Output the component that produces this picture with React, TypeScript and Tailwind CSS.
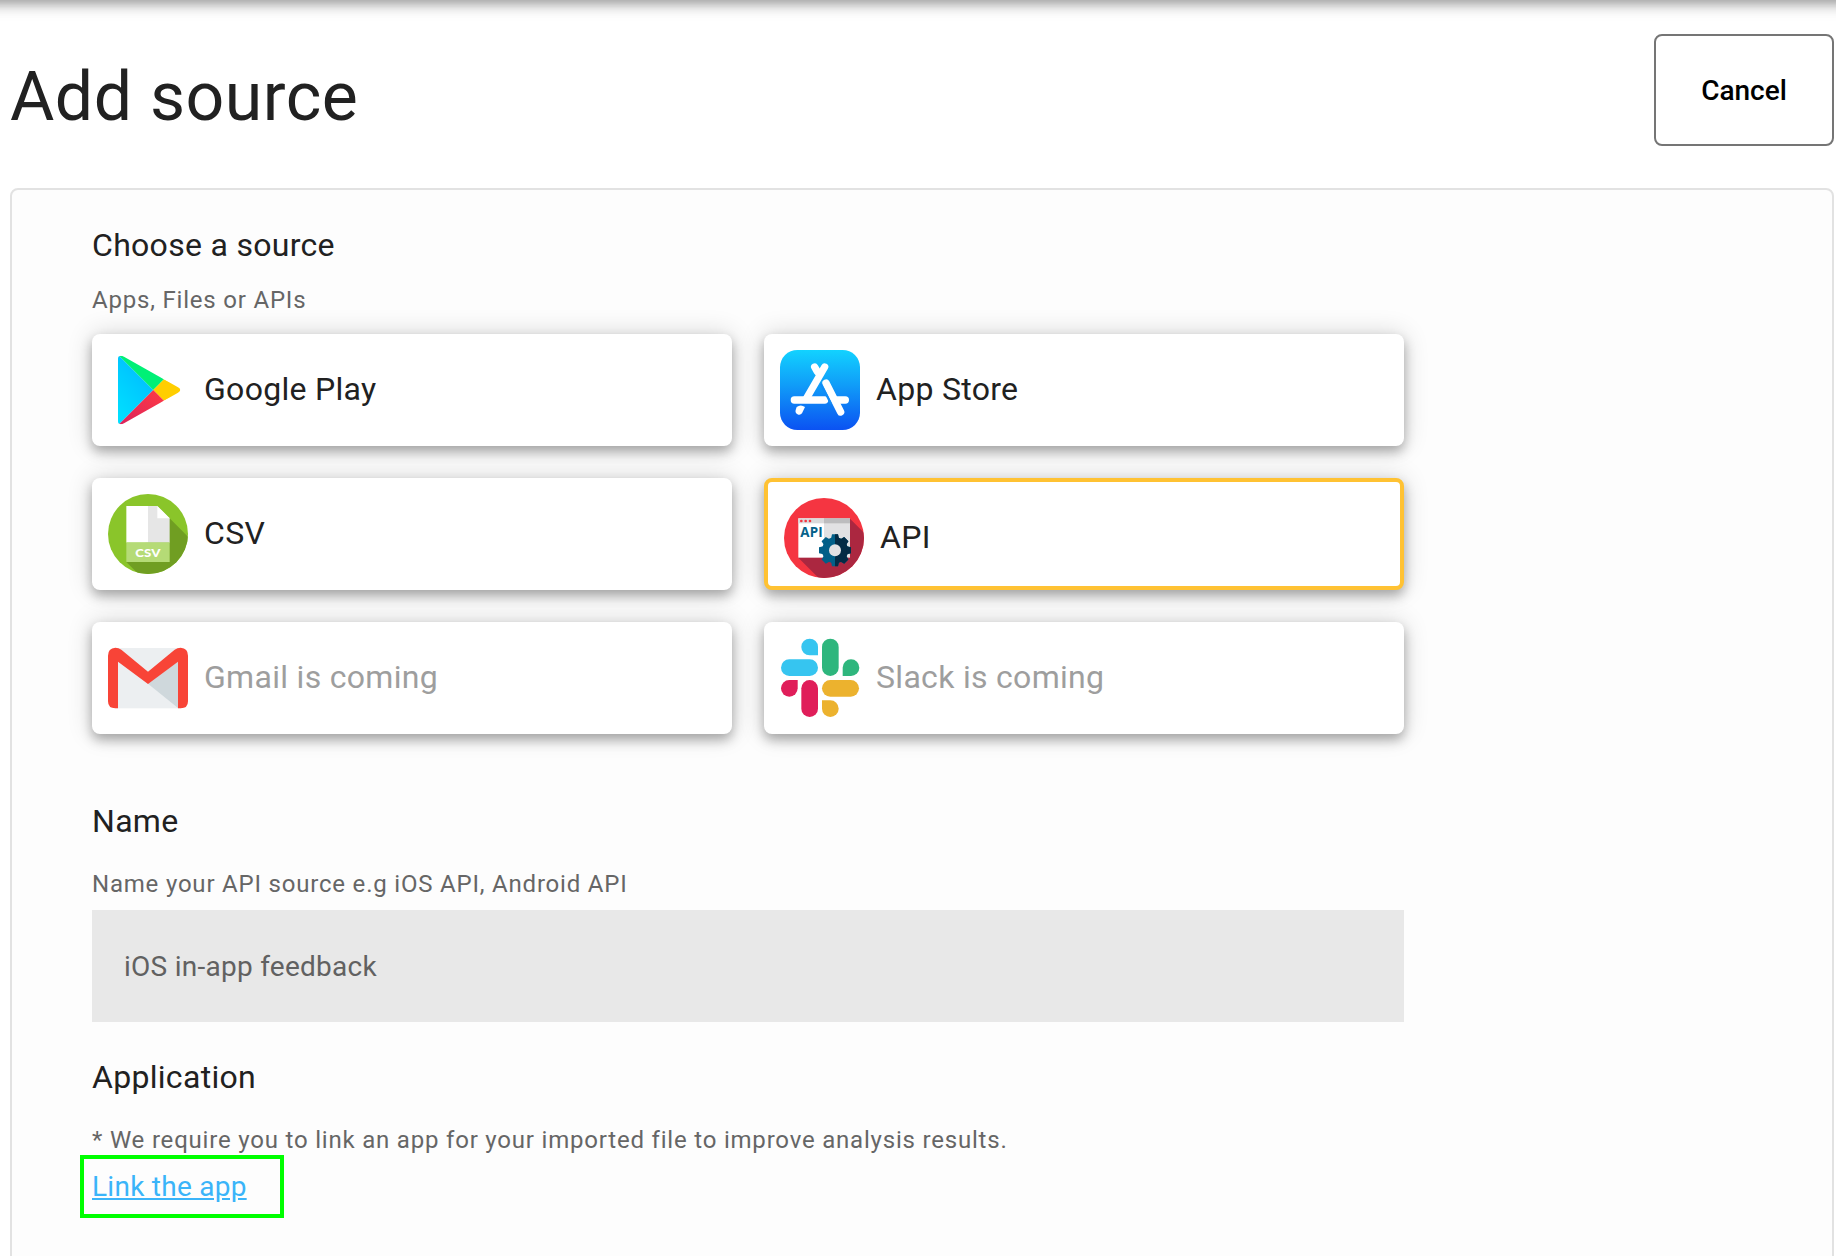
import type { ReactNode } from "react";

function GooglePlayIcon() {
  return (
    <svg viewBox="0 0 240 240" className="size-20 shrink-0" aria-hidden="true">
      <defs>
        <clipPath id="gp-clip">
          <path d="M30 26Q30 17 38 17Q43 17 48 20L210 112Q224 120 210 128L48 220Q43 223 38 223Q30 223 30 214Z" />
        </clipPath>
        <linearGradient id="gp-blue" x1="0.8" y1="0" x2="0.2" y2="1">
          <stop offset="0" stopColor="#00b8ff" />
          <stop offset="1" stopColor="#00e0ff" />
        </linearGradient>
        <linearGradient id="gp-red" x1="1" y1="0" x2="0" y2="1">
          <stop offset="0" stopColor="#ff3a44" />
          <stop offset="1" stopColor="#d8215f" />
        </linearGradient>
      </defs>
      <g clipPath="url(#gp-clip)">
        <path d="M30 14L136 120L30 226Z" fill="url(#gp-blue)" />
        <path d="M30 14L136 120L168 88L60 0Z" fill="#00f076" />
        <path d="M136 120L168 88L240 120L168 152Z" fill="#ffce00" />
        <path d="M136 120L168 152L60 240L30 226Z" fill="url(#gp-red)" />
      </g>
    </svg>
  );
}

function AppStoreIcon() {
  return (
    <svg viewBox="0 0 240 240" className="size-20 shrink-0" aria-hidden="true">
      <defs>
        <linearGradient id="as-bg" x1="0" y1="0" x2="0" y2="1">
          <stop offset="0" stopColor="#12d2ff" />
          <stop offset="0.45" stopColor="#109bf8" />
          <stop offset="1" stopColor="#0b52f2" />
        </linearGradient>
      </defs>
      <rect width="240" height="240" rx="52" fill="url(#as-bg)" />
      <g stroke="#fff" strokeWidth="22" strokeLinecap="round" fill="none">
        <path d="M104 51L112 65" />
        <path d="M134 51L80 144" />
        <path d="M43 150H134" />
        <path d="M172 150H196" />
        <path d="M138 99L182 186" />
      </g>
      <path d="M50 171Q62 162 75 171L66 190A11 11 0 0 1 47 180Z" fill="#fff" />
      <path d="M122 101L153 162" stroke="#118cf7" strokeWidth="6" />
    </svg>
  );
}

function CsvIcon() {
  return (
    <svg viewBox="0 0 240 240" className="size-20 shrink-0" aria-hidden="true">
      <defs>
        <clipPath id="csv-clip">
          <circle cx="120" cy="120" r="120" />
        </clipPath>
      </defs>
      <g clipPath="url(#csv-clip)">
        <rect width="240" height="240" fill="#8ac52a" />
        <path d="M185 73L250 138V250H101L55 204Z" fill="#709e22" />
      </g>
      <path d="M55 36H120V146H55Z" fill="#fff" />
      <path d="M120 36H148L185 73V146H120Z" fill="#e6e6e6" />
      <path d="M148 36V73H185Z" fill="#fff" />
      <rect x="55" y="145" width="130" height="59" fill="#b5db76" />
      <text x="82" y="188" textLength="76" lengthAdjust="spacingAndGlyphs" fontFamily="Lato, sans-serif" fontWeight="900" fontSize="36" fill="#fff">
        CSV
      </text>
    </svg>
  );
}

const gearTeeth = [0, 45, 90, 135, 180, 225, 270, 315];

function Gear({ fill }: { fill: string }) {
  return (
    <g fill={fill}>
      <circle cx="153" cy="157" r="39" />
      {gearTeeth.map((angle) => (
        <path key={angle} d="M141 122L144 109H162L165 122Z" transform={`rotate(${angle} 153 157)`} />
      ))}
    </g>
  );
}

function ApiIcon() {
  return (
    <svg viewBox="0 0 240 240" className="size-20 shrink-0" aria-hidden="true">
      <defs>
        <clipPath id="api-clip">
          <circle cx="120" cy="120" r="120" />
        </clipPath>
        <clipPath id="api-right">
          <rect x="153" y="90" width="87" height="130" />
        </clipPath>
      </defs>
      <g clipPath="url(#api-clip)">
        <rect width="240" height="240" fill="#f53541" />
        <path d="M198 62L250 114V250H114L43 179Z" fill="#ab2740" />
      </g>
      <rect x="43" y="61" width="77" height="118" fill="#fff" />
      <rect x="120" y="61" width="78" height="118" fill="#e1e1e3" />
      <rect x="43" y="61" width="77" height="15" fill="#d9d9da" />
      <rect x="120" y="61" width="78" height="15" fill="#bcbcbe" />
      <g fill="#f53541">
        <circle cx="52" cy="69" r="4" />
        <circle cx="65" cy="69" r="4" />
        <circle cx="78" cy="69" r="4" />
      </g>
      <text x="49" y="116" textLength="67" lengthAdjust="spacingAndGlyphs" fontFamily="'Open Sans', sans-serif" fontWeight="700" fontSize="43" fill="#04618a">
        API
      </text>
      <Gear fill="#015f88" />
      <g clipPath="url(#api-right)">
        <Gear fill="#032b45" />
      </g>
      <circle cx="153" cy="157" r="18" fill="#e1e1e3" />
    </svg>
  );
}

function GmailIcon() {
  return (
    <svg viewBox="0 0 240 240" className="size-20 shrink-0" aria-hidden="true">
      <rect x="20" y="30" width="200" height="181" fill="#eceff1" />
      <path d="M120 137L211 69V211Z" fill="#cfd8dc" />
      <path
        d="M22 29Q32 29 40 35L120 101L200 35Q208 29 218 29Q240 30 240 53V190Q240 211 218 211H210V71L120 138L30 71V211H22Q0 211 0 190V53Q0 30 22 29Z"
        fill="#f84437"
      />
    </svg>
  );
}

function SlackIcon() {
  return (
    <svg viewBox="0 0 240 240" className="size-20 shrink-0" aria-hidden="true">
      <g fill="#36c5f0">
        <path d="M114 52H89A25 25 0 1 1 114 27Z" />
        <rect x="3" y="64" width="111" height="50" rx="25" />
      </g>
      <g fill="#2eb67d">
        <rect x="126" y="2" width="50" height="112" rx="25" />
        <path d="M188 114V89A25 25 0 1 1 213 114Z" />
      </g>
      <g fill="#e01e5a">
        <path d="M53 126V151A25 25 0 1 1 28 126Z" />
        <rect x="64" y="126" width="50" height="111" rx="25" />
      </g>
      <g fill="#ecb22e">
        <rect x="126" y="126" width="111" height="50" rx="25" />
        <path d="M126 187H151A25 25 0 1 1 126 212Z" />
      </g>
    </svg>
  );
}

type Source = { label: string; icon: ReactNode; selected?: boolean; disabled?: boolean };

const sources: Source[] = [
  { label: "Google Play", icon: <GooglePlayIcon /> },
  { label: "App Store", icon: <AppStoreIcon /> },
  { label: "CSV", icon: <CsvIcon /> },
  { label: "API", icon: <ApiIcon />, selected: true },
  { label: "Gmail is coming", icon: <GmailIcon />, disabled: true },
  { label: "Slack is coming", icon: <SlackIcon />, disabled: true },
];

function SourceCard({ label, icon, selected, disabled }: Source) {
  return (
    <button
      type="button"
      disabled={disabled}
      className={`flex h-28 items-start gap-4 rounded-lg bg-white p-4 text-left text-[32px] leading-[78px] tracking-[0.3px] shadow-[0_6px_12px_0_rgba(0,0,0,0.29),0_0_26px_0_rgba(0,0,0,0.16)] ${
        selected ? "border-4 border-[#ffc233]" : ""
      } ${disabled ? "text-[#9e9e9e]" : "text-[#212121]"}`}
    >
      {icon}
      <span>{label}</span>
    </button>
  );
}

export default function App() {
  return (
    <div className="flex h-screen flex-col overflow-hidden bg-white font-[Roboto,sans-serif] text-[#212121]">
      <div className="-mx-8 -mt-16 h-16 shrink-0 shadow-[0_4px_8px_-2px_rgba(0,0,0,0.2),0_8px_10px_0_rgba(0,0,0,0.14),0_2px_20px_0_rgba(0,0,0,0.12)]" />
      <header className="flex h-[188px] shrink-0 items-start justify-between pt-[34px] pr-0.5 pl-2.5">
        <h1 className="mt-[23px] text-[68px] leading-[80px] tracking-[0.5px]">Add source</h1>
        <button
          type="button"
          className="h-28 w-[180px] rounded-lg border-2 border-[#757575] pt-0.5 text-[28px] font-medium text-black"
        >
          Cancel
        </button>
      </header>
      <main className="mr-0.5 ml-2.5 h-[1200px] shrink-0 rounded-t-lg border-2 border-[#e2e2e2] bg-[#fdfdfd] px-20 pt-[35px]">
        <section className="w-[1312px]">
          <h2 className="text-[32px] leading-10 tracking-[0.3px]">Choose a source</h2>
          <p className="mt-[19px] text-2xl leading-8 tracking-[0.8px] text-[#666]">Apps, Files or APIs</p>
          <div className="mt-[18px] grid grid-cols-2 gap-8">
            {sources.map((source) => (
              <SourceCard key={source.label} {...source} />
            ))}
          </div>
        </section>
        <section className="mt-[67px] w-[1312px]">
          <h2 className="text-[32px] leading-10 tracking-[0.3px]">Name</h2>
          <p className="mt-[27px] text-2xl leading-8 tracking-[0.8px] text-[#666]">
            Name your API source e.g iOS API, Android API
          </p>
          <div className="mt-2.5 flex h-28 items-center bg-[#e8e8e8] px-8 pt-0.5 text-[28px] tracking-[0.26px] text-[#616161]">
            iOS in-app feedback
          </div>
        </section>
        <section className="mt-[35px] w-[1312px]">
          <h2 className="text-[32px] leading-10 tracking-[0.3px]">Application</h2>
          <p className="mt-[27px] text-2xl leading-8 tracking-[0.8px] text-[#666]">
            * We require you to link an app for your imported file to improve analysis results.
          </p>
          <div className="-mt-px -ml-3 flex h-[63px] w-[204px] items-center border-4 border-[#00ff00] pl-2">
            <a href="#link" className="text-[28px] tracking-[0.26px] text-[#3ab4f9] underline">
              Link the app
            </a>
          </div>
        </section>
      </main>
    </div>
  );
}
